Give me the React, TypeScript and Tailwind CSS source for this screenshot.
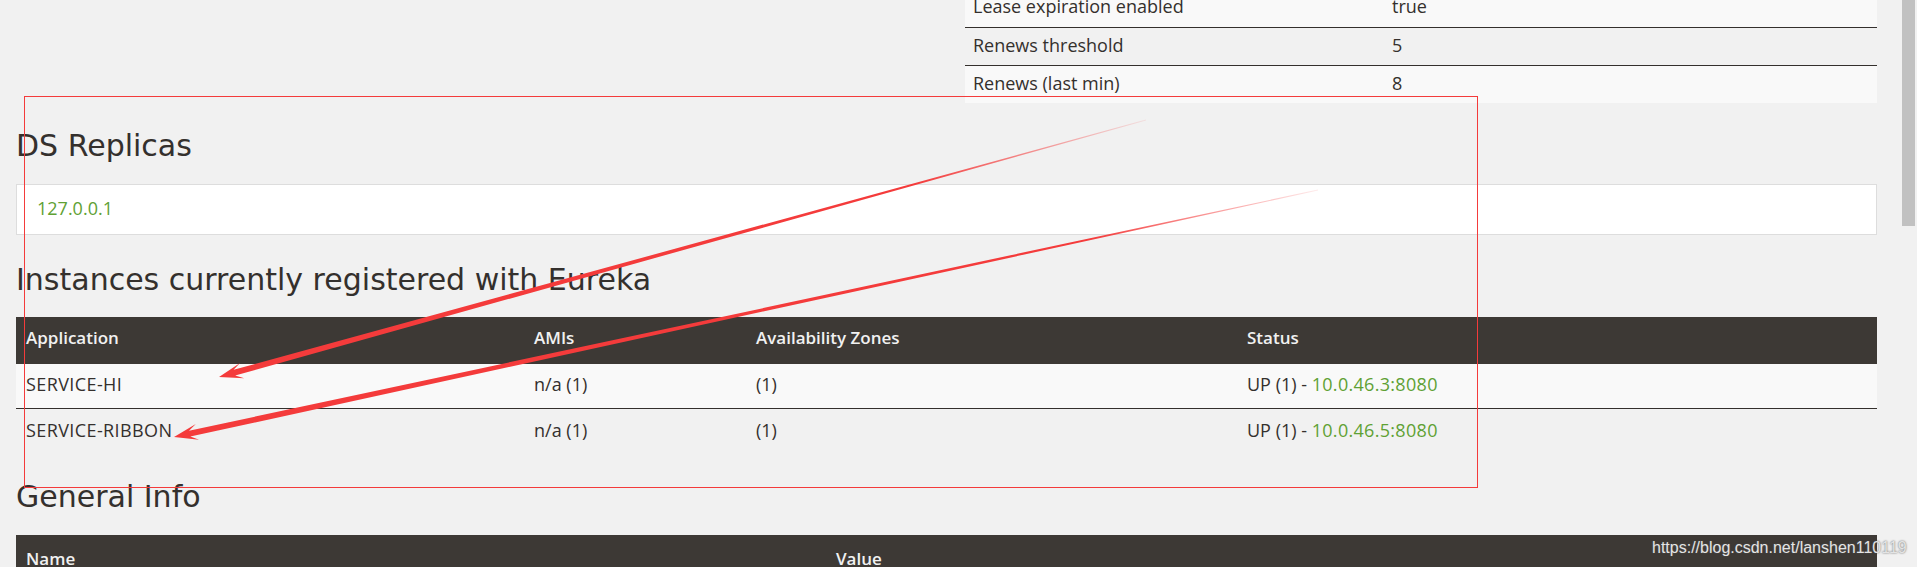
import React from 'react';

type Instance = { name: string; ami: string; zones: string; status: string; url: string };

const statusRows: [string, string][] = [
  ['Lease expiration enabled', 'true'],
  ['Renews threshold', '5'],
  ['Renews (last min)', '8'],
];

const instances: Instance[] = [
  { name: 'SERVICE-HI', ami: 'n/a', zones: '(1)', status: 'UP', url: '10.0.46.3:8080' },
  { name: 'SERVICE-RIBBON', ami: 'n/a', zones: '(1)', status: 'UP', url: '10.0.46.5:8080' },
];

// tapered annotation arrow, tip is where the head points
const arrowPoints = (sx: number, sy: number, tx: number, ty: number) => {
  const dx = sx - tx;
  const dy = sy - ty;
  const len = Math.hypot(dx, dy);
  const ux = dx / len;
  const uy = dy / len;
  const nx = -uy;
  const ny = ux;
  const head = 24;
  const notch = 16;
  const hw = 8;
  const sw = 3;
  const ew = 0.4;
  const pts = [
    [tx, ty],
    [tx + ux * head + nx * hw, ty + uy * head + ny * hw],
    [tx + ux * notch + nx * sw, ty + uy * notch + ny * sw],
    [sx + nx * ew, sy + ny * ew],
    [sx - nx * ew, sy - ny * ew],
    [tx + ux * notch - nx * sw, ty + uy * notch - ny * sw],
    [tx + ux * head - nx * hw, ty + uy * head - ny * hw],
  ];
  return pts.map((p) => `${p[0].toFixed(1)},${p[1].toFixed(1)}`).join(' ');
};

const Annotations = () => (
  <svg className="pointer-events-none absolute left-0 top-0" width="1917" height="567" viewBox="0 0 1917 567">
    <defs>
      <linearGradient id="a1" gradientUnits="userSpaceOnUse" x1="1146" y1="120" x2="219" y2="377">
        <stop offset="0" stopColor="#f43b3b" stopOpacity="0.1" />
        <stop offset="0.25" stopColor="#f43b3b" stopOpacity="1" />
        <stop offset="1" stopColor="#f43b3b" stopOpacity="1" />
      </linearGradient>
      <linearGradient id="a2" gradientUnits="userSpaceOnUse" x1="1318" y1="190" x2="174" y2="437">
        <stop offset="0" stopColor="#f43b3b" stopOpacity="0.1" />
        <stop offset="0.2" stopColor="#f43b3b" stopOpacity="1" />
        <stop offset="1" stopColor="#f43b3b" stopOpacity="1" />
      </linearGradient>
    </defs>
    <rect x="24.5" y="96.5" width="1453" height="391" fill="none" stroke="#f43b3b" strokeWidth="1" />
    <polygon points={arrowPoints(1146, 120, 219, 377)} fill="url(#a1)" />
    <polygon points={arrowPoints(1318, 190, 174, 437)} fill="url(#a2)" />
  </svg>
);

const Heading = ({ children, className }: { children: React.ReactNode; className: string }) => (
  <h2 className={`h-[33px] font-['DejaVu_Sans',sans-serif] text-[30px] font-normal leading-[33px] text-[#34302d] ${className}`}>
    {children}
  </h2>
);

export default function App() {
  return (
    <div className="relative flex h-[567px] w-[1917px] overflow-hidden bg-[#f1f1f1]">
      <main className="flex-1 pl-[16px] pr-[23px] font-['Open_Sans',sans-serif] text-[18px] text-[#34302d]">
        {/* tail of the system status tables */}
        <div className="-mt-[11px] flex">
          <div className="flex-1" />
          <div className="w-[912px]">
            {statusRows.map(([k, v], i) => (
              <div
                key={k}
                className={`grid grid-cols-[419px_1fr] items-center pb-[3px] ${
                  i === 0 ? 'h-[39px] border-b border-[#34302d] bg-[#f9f9f9]' : i === 1 ? 'h-[38px] border-b border-[#34302d] bg-[#f1f1f1]' : 'h-[37px] bg-[#f9f9f9]'
                }`}
              >
                <span className="pl-[8px]">{k}</span>
                <span className="pl-[8px]">{v}</span>
              </div>
            ))}
          </div>
        </div>

        <Heading className="mt-[26px]">DS Replicas</Heading>
        <div className="mt-[22px] flex h-[51px] items-center border border-[#dddddd] bg-white px-[20px] pb-[3px]">
          <a className="text-[#5fa134]">127.0.0.1</a>
        </div>

        <Heading className="mt-[28px]">Instances currently registered with Eureka</Heading>
        <div className="mt-[21px]">
          <div className="grid h-[47px] grid-cols-[508px_222px_491px_1fr] items-center bg-[#3d3935] pb-[6px] text-[17px] font-semibold text-[#f1f1f1]">
            <span className="pl-[10px]">Application</span>
            <span className="pl-[10px]">AMIs</span>
            <span className="pl-[10px]">Availability Zones</span>
            <span className="pl-[10px]">Status</span>
          </div>
          {instances.map((r, i) => (
            <div
              key={r.name}
              className={`grid h-[45px] grid-cols-[508px_222px_491px_1fr] items-center pb-[3px] ${
                i === 0 ? 'border-b border-[#34302d] bg-[#f9f9f9]' : 'bg-[#f1f1f1]'
              }`}
            >
              <span className="pl-[10px] font-medium tracking-[0.4px]">{r.name}</span>
              <span className="pl-[10px]">
                <b className="font-medium">{r.ami}</b> (1)
              </span>
              <span className="pl-[10px]">{r.zones}</span>
              <span className="pl-[10px]">
                <b className="font-medium">{r.status}</b> (1) - <a className="tracking-[0.3px] text-[#5fa134]">{r.url}</a>
              </span>
            </div>
          ))}
        </div>

        <Heading className="mt-[26px]">General Info</Heading>
        <div className="mt-[22px] grid h-[47px] grid-cols-[810px_1fr] items-center bg-[#3d3935] text-[17px] font-semibold text-[#f1f1f1]">
          <span className="pl-[10px]">Name</span>
          <span className="pl-[10px]">Value</span>
        </div>
      </main>

      {/* browser scrollbar */}
      <div className="w-[17px] bg-[#f1f1f1] px-[2px]">
        <div className="h-[226px] bg-[#c1c1c1]" />
      </div>

      <Annotations />

      <span className="absolute left-[1652px] top-[539px] font-['Liberation_Sans',Arial,sans-serif] text-[16px] leading-[18px] text-[#e4e4e4] [text-shadow:0_0_2px_#555]">
        https://blog.csdn.net/lanshen110119
      </span>
    </div>
  );
}
